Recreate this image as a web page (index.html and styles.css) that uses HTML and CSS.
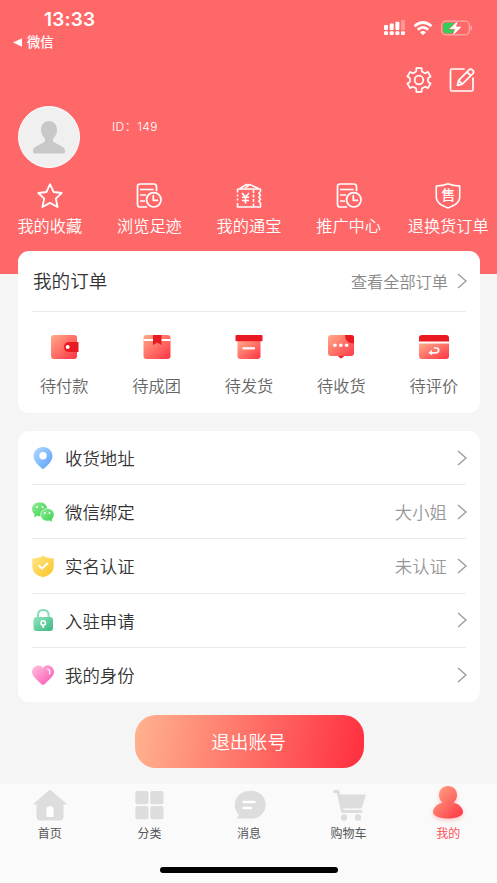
FILE: index.html
```html
<!DOCTYPE html>
<html lang="zh-CN">
<head>
<meta charset="utf-8">
<title>我的</title>
<link rel="stylesheet" href="styles.css">
</head>
<body>
<svg class="defs" width="0" height="0" aria-hidden="true">
  <defs>
    <linearGradient id="red" x1="0" y1="0" x2="1" y2="1"><stop offset="0" stop-color="#ffab88"/><stop offset="1" stop-color="#ff3344"/></linearGradient>
    <linearGradient id="blue" x1="0" y1="0" x2="1" y2="1"><stop offset="0" stop-color="#b2daff"/><stop offset="1" stop-color="#59a0fa"/></linearGradient>
    <linearGradient id="green" x1="0" y1="0" x2="1" y2="1"><stop offset="0" stop-color="#99ec9c"/><stop offset="1" stop-color="#2fd148"/></linearGradient>
    <linearGradient id="gold" x1="0" y1="0" x2="1" y2="1"><stop offset="0" stop-color="#ffe58b"/><stop offset="1" stop-color="#fcc423"/></linearGradient>
    <linearGradient id="mint" x1="0" y1="0" x2="1" y2="1"><stop offset="0" stop-color="#92e4bd"/><stop offset="1" stop-color="#39b982"/></linearGradient>
    <linearGradient id="pink" x1="0" y1="0" x2="1" y2="1"><stop offset="0" stop-color="#ffc5e0"/><stop offset="1" stop-color="#fb4fb2"/></linearGradient>
    <symbol id="record" viewBox="0 0 26 26"><g fill="none" stroke="#fff" stroke-width="1.700" stroke-linecap="round" stroke-linejoin="round"><path d="M10.500 24H4.200Q1.500 24 1.500 21.300V3.700Q1.500 1 4.200 1H17.800Q20.500 1 20.500 3.700V7.500M4.800 6.500H17M4.800 12H9.500M4.800 18H8.500"/><circle cx="17.800" cy="16.800" r="7.200"/><path d="M17.300 12.700V17.300H21.500"/></g></symbol>
    <symbol id="chevron" viewBox="0 0 10 16"><path d="M1 1 9 8 1 15" fill="none" stroke="#999" stroke-width="1.300"/></symbol>
  </defs>
</svg>
<div class="app">
  <header class="header">
    <div class="status">
      <div class="clock"><div class="time">13:33</div><div class="back"><svg width="9" height="9" viewBox="0 0 9 9"><path d="M0 4.500 9 .3V8.700Z" fill="#fff"/></svg><span>微信</span></div></div>
      <div class="signals">
        <svg width="22" height="16" viewBox="0 0 22 16" fill="#fff"><rect x="0" y="5" width="4" height="5" rx="1"/><rect x="5.700" y="3.500" width="4" height="6.500" rx="1"/><rect x="11.400" y="1.700" width="4" height="8.300" rx="1"/><rect x="17" y="0" width="4" height="10" rx="1" opacity=".3"/><rect x="0" y="11.300" width="4" height="3.700" rx="1"/><rect x="5.700" y="11.300" width="4" height="3.700" rx="1"/><rect x="11.400" y="11.300" width="4" height="3.700" rx="1"/><rect x="17" y="11.300" width="4" height="3.700" rx="1"/></svg>
        <svg width="20" height="15" viewBox="0 0 20 15" fill="none" stroke="#fff" stroke-width="2.700"><path d="M1.500 5.200Q10-2.200 18.500 5.200"/><path d="M4.700 8.700Q10 4.200 15.300 8.700"/><path d="M7 11.200Q10 8.700 13 11.200L10 14.300Z" fill="#fff" stroke="none"/></svg>
        <svg width="31" height="16" viewBox="0 0 31 16"><rect x=".7" y="1.200" width="27.600" height="13.600" rx="4" fill="none" stroke="#fff" stroke-opacity=".45" stroke-width="1.200"/><path d="M29.500 5.500Q31 6 31 8T29.500 10.500Z" fill="#fff" opacity=".5"/><path d="M4.600 2.800H13V13.200H4.600Q2.200 13.200 2.200 10.800V5.200Q2.200 2.800 4.600 2.800Z" fill="#30d158"/><path d="M17 .5 8.500 9H14L11.800 15.500 20.500 6.800H15Z" fill="#fff" stroke="#ff6868" stroke-width="1.200" paint-order="stroke"/></svg>
      </div>
    </div>
    <div class="tools">
      <svg width="26" height="26" viewBox="0 0 26 26" fill="none" stroke="#fff" stroke-width="1.700" stroke-linejoin="round"><path d="M10.300 1.200H15.700V3.700Q15.700 4.700 16.800 5.100L18 5.800Q19 6.500 20 5.900L21.900 4.800 24.600 9.500 22.600 10.700Q21.800 11.300 22 12.300V13.700Q21.800 14.700 22.600 15.300L24.600 16.500 21.900 21.200 20 20.100Q19 19.500 18 20.200L16.800 20.900Q15.700 21.300 15.700 22.300V24.800H10.300V22.300Q10.300 21.300 9.200 20.900L8 20.200Q7 19.500 6 20.100L4.100 21.200 1.400 16.500 3.400 15.300Q4.200 14.700 4 13.700V12.300Q4.200 11.300 3.400 10.700L1.400 9.500 4.100 4.800 6 5.900Q7 6.500 8 5.800L9.200 5.100Q10.300 4.700 10.300 3.700Z"/><circle cx="13" cy="13" r="4.300"/></svg>
      <svg width="26" height="26" viewBox="0 0 26 26" fill="none" stroke="#fff" stroke-width="1.700" stroke-linecap="round" stroke-linejoin="round"><path d="M15 2H3Q1.500 2 1.500 3.500V22.500Q1.500 24 3 24H22.500Q24 24 24 22.500V11"/><path d="M8.500 18.300 9.600 13.400 20 2.800Q21.500 1.300 23.500 3T24 6.500L13.300 17.200ZM17.800 5 21.900 8.700M9.700 13.400 13.200 17"/></svg>
    </div>
    <div class="profile">
      <div class="avatar"><svg width="32" height="33" viewBox="0 0 32 33" fill="#c8c8c8"><path d="M16 0C21 0 24 4 24 9C24 13 22 15 20 18Q19.300 20.500 22 21.800L29.500 25.700Q32 27 32 30V31Q32 32.500 30.500 32.500H1.500Q0 32.500 0 31V30Q0 27 2.500 25.700L10 21.800Q12.700 20.500 12 18C10 15 8 13 8 9C8 4 11 0 16 0Z"/></svg></div>
      <div class="uid">ID：149</div>
    </div>
    <nav class="shortcuts">
      <a><svg width="26" height="26" viewBox="0 0 26 26"><path d="M13 1.200 16.600 9 24.700 10 18.800 15.600 20.600 24 13 19.900 5.400 24 7.200 15.600 1.300 10 9.400 9Z" fill="none" stroke="#fff" stroke-width="1.800" stroke-linejoin="round"/></svg><span>我的收藏</span></a>
      <a><svg width="26" height="26"><use href="#record"/></svg><span>浏览足迹</span></a>
      <a><svg width="26" height="26" viewBox="0 0 26 26" fill="none" stroke="#fff" stroke-width="1.600" stroke-linejoin="round"><path d="M1.500 6H24.500V8.500L22.800 10.300 24.500 12.200 22.800 14.300 24.500 16.300 22.800 18.300 24.500 20.300V24H1.500V20M1.500 6V9.500M1.500 11.500V13.500M1.500 15.500V17.500"/><path d="M4 5.500 10.500 1.500 13 3.200M9 5.500 13.500 1.500 22.500 5.500"/><path d="M6 10 9.500 14 13 10M9.500 14V20.500M6 14.300H13M6 17.500H13"/><path d="M17.500 7V24" stroke-dasharray="3 1.500"/></svg><span>我的通宝</span></a>
      <a><svg width="26" height="26"><use href="#record"/></svg><span>推广中心</span></a>
      <a><span class="shield"><svg width="26" height="26" viewBox="0 0 26 26"><path d="M1.300 3Q8 3 13 .8Q18 3 24.700 3V14C24.700 20 19 22.500 13 25C7 22.500 1.300 20 1.300 14Z" fill="none" stroke="#fff" stroke-width="1.600" stroke-linejoin="round"/></svg><b>售</b></span><span>退换货订单</span></a>
    </nav>
  </header>
  <main>
    <section class="card orders">
      <div class="orders-head"><h2>我的订单</h2><a>查看全部订单<svg width="10" height="16"><use href="#chevron"/></svg></a></div>
      <div class="order-list">
        <a><svg width="30" height="26" viewBox="0 0 30 26"><rect x="2" y="1" width="26" height="24" rx="3" fill="url(#red)"/><path d="M19.500 8H29.500V18H19.500Q15 17.500 15 13T19.500 8Z" fill="#e91921"/><circle cx="18.700" cy="13" r="2" fill="#fff"/></svg><span>待付款</span></a>
        <a><svg width="30" height="26" viewBox="0 0 30 26"><rect x="1.500" y="1" width="27" height="24" rx="3" fill="url(#red)"/><path d="M1.500 5H28.500V7H1.500Z" fill="#fff"/><path d="M11 1H19.500V11L15.200 8.500 11 11Z" fill="#e91921"/></svg><span>待成团</span></a>
        <a><svg width="30" height="26" viewBox="0 0 30 26"><path d="M3.500 7H26.500V22Q26.500 25 23.500 25H6.500Q3.500 25 3.500 22Z" fill="url(#red)"/><rect x="1.500" y="1" width="27" height="6.300" rx="1" fill="#e91921"/><path d="M8.500 14.300H21" stroke="#fff" stroke-width="2.200"/></svg><span>待发货</span></a>
        <a><svg width="30" height="26" viewBox="0 0 30 26"><path d="M5 1H25Q28 1 28 4V19Q28 22 25 22H18L15 24.500 12 22H5Q2 22 2 19V4Q2 1 5 1Z" fill="url(#red)"/><path d="M19 1H25Q28 1 28 4V9.500Q19 9.500 19 1ZM12 22H18L15 24.500Z" fill="#e91921"/><g fill="#fff"><circle cx="9" cy="11.300" r="1.800"/><circle cx="14.800" cy="11.300" r="1.800"/><circle cx="20.600" cy="11.300" r="1.800"/></g></svg><span>待收货</span></a>
        <a><svg width="30" height="26" viewBox="0 0 30 26"><path d="M3 1H27Q30 1 30 4V7.500H0V4Q0 1 3 1Z" fill="#e91921"/><path d="M0 9.500H30V22Q30 25 27 25H3Q0 25 0 22Z" fill="url(#red)"/><path d="M15 14H17Q19.700 14 19.700 16.200T17 18.800H11" fill="none" stroke="#fff" stroke-width="1.700"/><path d="M9.300 18.800 13 16V21.200Z" fill="#fff"/></svg><span>待评价</span></a>
      </div>
    </section>
    <section class="card menu">
      <a><svg class="icon" width="22" height="24" viewBox="0 0 22 24"><path d="M11 1C16.500 1 20.500 5 20.500 10.200C20.500 15.500 14 20.500 12 22.500Q11 23.500 10 22.500C8 20.500 1.500 15.500 1.500 10.200C1.500 5 5.500 1 11 1Z" fill="url(#blue)"/><circle cx="11" cy="9.700" r="3.700" fill="#fff"/></svg><span>收货地址</span><svg class="arrow" width="10" height="16"><use href="#chevron"/></svg></a>
      <a><svg class="icon" width="22" height="24" viewBox="0 0 22 24"><path d="M7.700 2.200C12 2.200 15.300 5 15.300 9S12 16.200 7.700 16.200L5 15.700 2.200 17.500 2.400 14.200Q0 12 0 9C0 5 3.400 2.200 7.700 2.200Z" fill="url(#green)"/><path d="M15.200 8.500C19 8.500 22 11 22 14.700Q22 17.300 20 19.300L20.300 22 17.500 20.700C13 22 8.500 19 8.500 14.700C8.500 11 11.500 8.500 15.200 8.500Z" fill="url(#green)" stroke="#fff" stroke-width=".5"/><g fill="#fff"><circle cx="5" cy="7" r="1"/><circle cx="10.500" cy="7" r="1"/><circle cx="12.800" cy="13" r="1"/><circle cx="17.500" cy="13" r="1"/></g></svg><span>微信绑定</span><em>大小姐</em><svg class="arrow" width="10" height="16"><use href="#chevron"/></svg></a>
      <a><svg class="icon" width="22" height="24" viewBox="0 0 22 24"><path d="M11 1.500Q15 4.500 21.700 4.500V12C21.700 18.500 17 21.500 11 23.300C5 21.500.3 18.500.3 12V4.500Q7 4.500 11 1.500Z" fill="url(#gold)"/><path d="M6.500 11.300 10 14.500 16 9" fill="none" stroke="#fff" stroke-width="2"/></svg><span>实名认证</span><em>未认证</em><svg class="arrow" width="10" height="16"><use href="#chevron"/></svg></a>
      <a><svg class="icon" width="22" height="24" viewBox="0 0 22 24"><path d="M6 11V7Q6 2 11.300 2T16.600 7V11" fill="none" stroke="#83deb5" stroke-width="2"/><rect x="1.500" y="9" width="19.500" height="14" rx="3" fill="url(#mint)"/><circle cx="11.200" cy="15" r="2.200" fill="none" stroke="#fff" stroke-width="1.600"/><path d="M11.200 17V20" stroke="#fff" stroke-width="1.600"/></svg><span>入驻申请</span><svg class="arrow" width="10" height="16"><use href="#chevron"/></svg></a>
      <a><svg class="icon" width="22" height="24" viewBox="0 0 22 24"><path d="M11 5C14-.3 22 2.800 22 9C22 13 17 17 12.500 21.200Q11 22.500 9.500 21.200C5 17 0 13 0 9C0 2.800 8 0 11 5Z" fill="url(#pink)"/><path d="M15.500 6Q18.800 7 17.500 11" fill="none" stroke="#fff" stroke-width="1.200" stroke-linecap="round"/></svg><span>我的身份</span><svg class="arrow" width="10" height="16"><use href="#chevron"/></svg></a>
    </section>
    <button class="logout">退出账号</button>
  </main>
  <footer class="tabbar">
    <nav>
      <a><svg width="34" height="36" viewBox="0 0 34 36"><path d="M17 5 33.200 19H30V32Q30 35 27 35H7Q4 35 4 32V19H.8Z" fill="#ddd" stroke="#ddd" stroke-linejoin="round"/><path d="M13.500 32V24.500Q13.500 21.300 17 21.300T20.500 24.500V32Z" fill="#fff"/></svg><span>首页</span></a>
      <a><svg width="34" height="36" viewBox="0 0 34 36" fill="#ddd"><rect x="3.300" y="6" width="13.200" height="13.200" rx="2"/><rect x="18.300" y="6" width="13.200" height="13.200" rx="2"/><rect x="3.300" y="21" width="13.200" height="13.200" rx="2"/><rect x="18.300" y="21" width="13.200" height="13.200" rx="2"/></svg><span>分类</span></a>
      <a><svg width="34" height="36" viewBox="0 0 34 36"><path d="M17 6A14 14 0 1 1 17 33.500H4Q6 32 7 30A14 14 0 0 1 17 6Z" fill="#ddd"/><path d="M11.500 17H22.500M11.500 23H19" stroke="#fff" stroke-width="2.400" stroke-linecap="round"/></svg><span>消息</span></a>
      <a><svg width="34" height="36" viewBox="0 0 34 36"><path d="M2.500 6.500H6L10.500 26.500H29" fill="none" stroke="#ddd" stroke-width="3" stroke-linecap="round" stroke-linejoin="round"/><path d="M7 9.500H33Q34 9.500 33.600 11L30.500 21Q29.700 23.500 28 23.500H10Z" fill="#ddd"/><circle cx="12" cy="32.500" r="3.200" fill="#ddd"/><circle cx="26" cy="32.500" r="3.200" fill="#ddd"/></svg><span>购物车</span></a>
      <a class="active"><svg width="34" height="36" viewBox="0 0 34 36"><path d="M17 1C22.500 1 26 5 26 10Q26 14.500 22.500 17.500C28 19 32 23 32 27C32 31 25.500 33.500 17 33.500S2 31 2 27C2 23 6 19 11.500 17.500Q8 14.500 8 10C8 5 11.500 1 17 1Z" fill="url(#red)"/></svg><span>我的</span></a>
    </nav>
    <div class="home-indicator"></div>
  </footer>
</div>
</body>
</html>
```
FILE: styles.css
```css
* { box-sizing: border-box; }
body { margin: 0; background: #f5f5f5; font-family: "Noto Sans CJK SC", sans-serif; color: #333; }
.defs { display: block; position: absolute; }
svg { display: block; flex: none; }
.app { width: 497px; height: 883px; display: flex; flex-direction: column; overflow: hidden; }

.header { height: 274px; flex: none; background: #ff6868; color: #fff; }
.status { height: 66px; display: flex; justify-content: space-between; padding: 8px 25px 0 13px; }
.time { font: 600 19px/23px Inter, sans-serif; letter-spacing: .2px; padding-left: 31px; }
.back { display: flex; align-items: center; gap: 5px; font-size: 13.3px; line-height: 22px; font-weight: 500; }
.signals { display: flex; align-items: center; gap: 8px; height: 16px; margin-top: 12px; }
.signals svg:first-child { margin-right: -1px; }
.tools { height: 40px; display: flex; justify-content: flex-end; gap: 17px; padding: 1px 22px 0 0; }
.profile { height: 62px; display: flex; padding-left: 18px; }
.avatar { width: 62px; height: 62px; border-radius: 50%; border: 1.500px solid #fff; background: #f0f0f0; display: flex; justify-content: center; padding-top: 13.500px; }
.uid { margin-left: 32px; font-family: Inter, "Noto Sans CJK SC", sans-serif; font-size: 12px; line-height: 42px; letter-spacing: .45px; font-weight: 300; }
.shortcuts { display: grid; grid-template-columns: repeat(5, 1fr); padding-top: 15px; margin-right: -1px; }
.shortcuts a { display: flex; flex-direction: column; align-items: center; gap: 4px; font-size: 16.200px; line-height: 24px; white-space: nowrap; font-weight: 350; }
.shield { position: relative; width: 26px; height: 26px; }
.shield b { position: absolute; inset: 0; text-align: center; font-size: 14px; line-height: 22px; font-weight: 500; }

main { flex: 1; display: flex; flex-direction: column; align-items: center; margin-top: -23px; padding: 0 17px 0 18px; }
.card { width: 462px; flex: none; border-radius: 11px; background: #fff; }
.orders { height: 162px; padding: 0; }
.orders-head { height: 61px; margin: 0 14px; display: flex; align-items: center; justify-content: space-between; border-bottom: 1px solid #eaeaea; }
.orders-head h2 { margin: 0; padding: 0 0 4px 1px; font-size: 18.600px; font-weight: 350; }
.orders-head a { display: flex; align-items: center; gap: 9px; font-size: 16.200px; line-height: 24px; padding-bottom: 1px; color: #888; font-weight: 350; }
.order-list { display: grid; grid-template-columns: repeat(5, 1fr); padding-top: 22px; }
.order-list a { display: flex; flex-direction: column; align-items: center; gap: 13px; font-size: 16.200px; line-height: 24px; color: #666; font-weight: 350; }
.menu { height: 271px; margin-top: 18px; padding: 0 14px; display: grid; grid-template-rows: repeat(5, 1fr); }
.menu a { display: flex; align-items: center; border-bottom: 1px solid #eaeaea; font-size: 17.400px; font-weight: 350; }
.menu a:last-child { border-bottom: 0; }
.menu .icon { margin-right: 11px; }
.menu em { margin-left: auto; font-style: normal; color: #999; }
.menu .arrow { margin-left: auto; }
.menu em + .arrow { margin-left: 10px; }
.menu .arrow, .orders-head a svg { margin-right: -1px; }
.logout { width: 229px; height: 53px; margin: 12.500px 0 0 1px; border: 0; border-radius: 21px; background: linear-gradient(100deg, #ffb38f, #ff2e3f); color: #fff; font: 350 18.700px/51px "Noto Sans CJK SC", sans-serif; padding: 0 2px 2px 0; }

.tabbar { height: 99px; flex: none; background: #fafafa; }
.tabbar nav { height: 83px; display: grid; grid-template-columns: repeat(5, 1fr); margin-right: -1px; }
.tabbar a { display: flex; flex-direction: column; align-items: center; gap: 4px; padding-top: 1px; font-size: 12px; line-height: 16px; color: #555; }
.tabbar .active { color: #ff4f55; }
.active svg { filter: drop-shadow(0 2px 2px rgba(255, 85, 80, .3)); overflow: visible; }
.home-indicator { width: 178px; height: 6px; margin: 0 auto; border-radius: 3px; background: #000; }
```
